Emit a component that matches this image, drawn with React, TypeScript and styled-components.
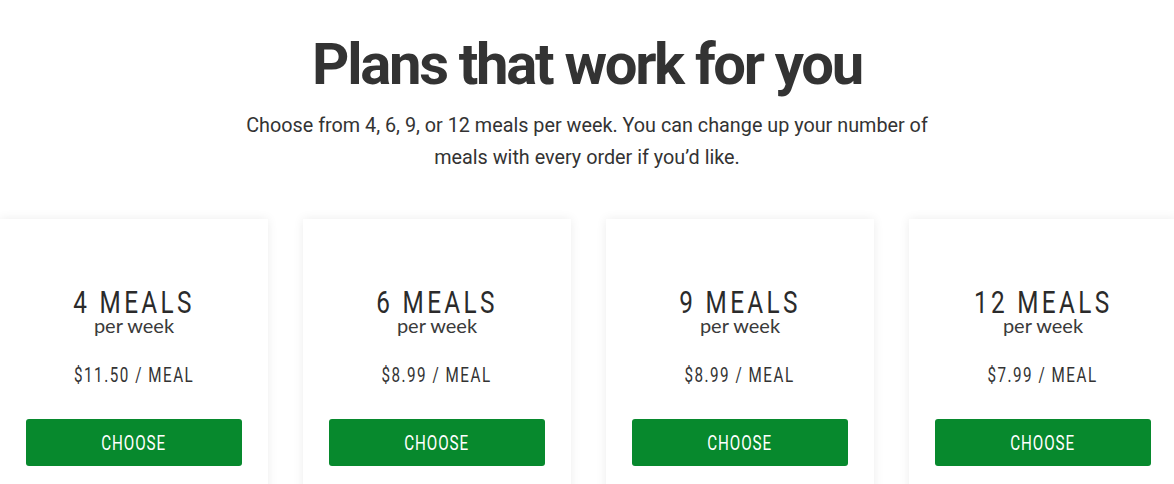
import React from 'react'
import styled, { createGlobalStyle } from 'styled-components'

const GlobalStyle = createGlobalStyle`
  body {
    margin: 0;
    background: #fff;
    font-family: Roboto, "Liberation Sans", sans-serif;
    color: #333;
  }
`

const Page = styled.div`
  width: 1174px;
  height: 484px;
  overflow: hidden;
`

const Header = styled.div`
  text-align: center;
  padding-top: 28px;
`

const Title = styled.h1`
  font-family: Roboto, sans-serif;
  font-weight: 700;
  font-size: 58px;
  line-height: 72px;
  letter-spacing: -2.3px;
  margin: 0;
  color: #333;
`

const Lead = styled.p`
  font-size: 19.8px;
  line-height: 32px;
  margin: 10px auto 0;
  max-width: 720px;
  color: #333;
`

const Cards = styled.div`
  display: flex;
  gap: 35px;
  margin-top: 45px;
`

const Card = styled.div`
  flex: 0 0 268px;
  height: 300px;
  background: #fff;
  box-shadow: 0 0 10px rgba(0, 0, 0, 0.08);
  display: flex;
  flex-direction: column;
  align-items: center;
  padding: 70px 26px 0;
  box-sizing: border-box;
`

// narrow caps (the page's condensed display face)
const Narrow = styled.span<{ size: number; spacing: number }>`
  display: inline-block;
  font-family: Roboto, sans-serif;
  font-weight: 400;
  font-size: ${(p) => p.size}px;
  letter-spacing: ${(p) => p.spacing}px;
  transform: scaleX(0.76);
  white-space: nowrap;
`

const Meals = styled(Narrow)`
  line-height: 26px;
  color: #2b2b2b;
`

const PerWeek = styled.div`
  font-family: Lato, sans-serif;
  font-size: 20px;
  line-height: 18px;
  margin-top: 1px;
  color: #3a3a3a;
`

const Price = styled(Narrow)`
  line-height: 20px;
  margin-top: 31px;
  color: #333;
`

const ChooseButton = styled.button`
  margin-top: 34px;
  width: 100%;
  height: 47px;
  border: none;
  border-radius: 3px;
  background: #07892d;
  color: #fff;
  cursor: pointer;
  padding: 0;
`

const ButtonLabel = styled(Narrow)`
  line-height: 20px;
`

const plans = [
  { meals: '4 MEALS', price: '$11.50 / MEAL' },
  { meals: '6 MEALS', price: '$8.99 / MEAL' },
  { meals: '9 MEALS', price: '$8.99 / MEAL' },
  { meals: '12 MEALS', price: '$7.99 / MEAL' },
]

export default function App() {
  return (
    <Page>
      <GlobalStyle />
      <Header>
        <Title>Plans that work for you</Title>
        <Lead>
          Choose from 4, 6, 9, or 12 meals per week. You can change up your number of meals with every order if you’d like.
        </Lead>
      </Header>
      <Cards>
        {plans.map((p) => (
          <Card key={p.meals}>
            <Meals size={32} spacing={4.4}>{p.meals}</Meals>
            <PerWeek>per week</PerWeek>
            <Price size={20} spacing={2.0}>{p.price}</Price>
            <ChooseButton>
              <ButtonLabel size={20} spacing={1.2}>CHOOSE</ButtonLabel>
            </ChooseButton>
          </Card>
        ))}
      </Cards>
    </Page>
  )
}
